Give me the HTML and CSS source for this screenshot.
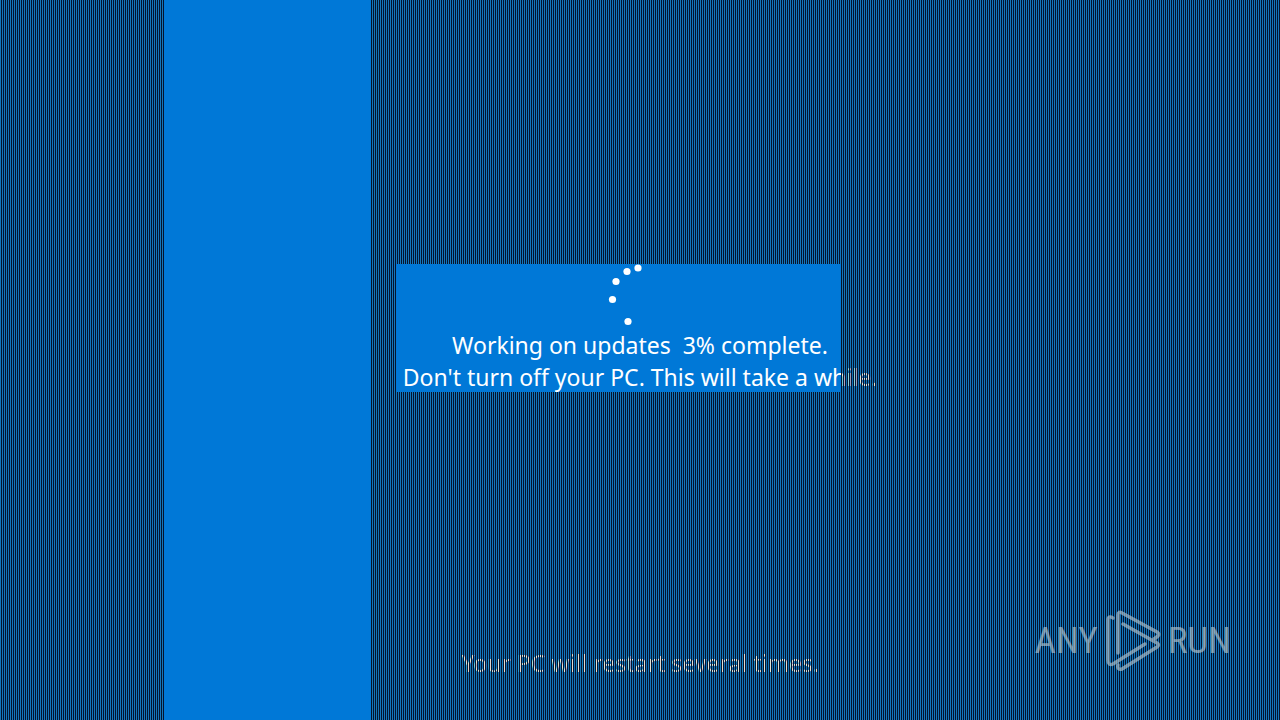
FILE: index.html
```
<!DOCTYPE html>
<html lang="en">
<head>
    <meta charset="UTF-8">
    <meta name="viewport" content="width=device-width, initial-scale=1.0">
    <title>Working on updates</title>
    <link rel="stylesheet" href="styles.css">
</head>
<body>
    <div class="screen">
        <div class="status">
            <svg class="spinner" width="60" height="64" viewBox="0 0 60 64" fill="#fff">
                <circle cx="28" cy="5" r="3.6"/>
                <circle cx="17" cy="8.5" r="3.6"/>
                <circle cx="6" cy="18.5" r="3.6"/>
                <circle cx="2.5" cy="36.5" r="3.6"/>
                <circle cx="18" cy="58.5" r="3.6"/>
            </svg>
            <p>Working on updates&nbsp; 3% complete.</p>
            <p>Don't turn off your PC. This will take a while.</p>
        </div>
        <p class="restart">Your PC will restart several times.</p>
    </div>
    <div class="mesh"></div>
    <div class="brand">
        <span>ANY</span>
        <svg width="56" height="62" viewBox="0 0 56 62" fill="none" stroke="#b4c4cc" stroke-width="3.5" stroke-linejoin="round" stroke-linecap="round">
            <path d="M13 43V5q0-4 4-2L52 22q3 2 1 4l-4 3"/>
            <path d="M8 8q-5-3-5 2v40q0 6 5 4L40 34"/>
            <path d="M18 14L52 33q3 2 0 4L17 59q-5 1-4-4"/>
        </svg>
        <span>RUN</span>
    </div>
</body>
</html>
```
FILE: styles.css
```
* {
    box-sizing: border-box;
}
body {
    margin: 0;
    background: #0078d7;
    color: #fff;
    font-family: "Noto Sans", "Open Sans", sans-serif;
    font-size: 23px;
    line-height: 32px;
}
p {
    margin: 0;
}
.screen {
    min-height: 100vh;
    padding-bottom: 41px;
    display: flex;
    flex-direction: column;
    align-items: center;
    text-align: center;
}
.status {
    margin: auto 0;
    padding-top: 8px;
}
.spinner {
    display: block;
    margin: 0 auto 2px;
    overflow: visible;
}
/* dark lines over everything except the side band and the status panel */
.mesh {
    position: absolute;
    top: 0;
    left: 0;
    width: 100%;
    height: 100%;
    background: linear-gradient(to right, rgba(100, 110, 70, 0.2) 50%, #04142e 50%);
    background-size: 2px 2px;
    clip-path: polygon(evenodd,
        0 0, 100% 0, 100% 100%, 0 100%, 0 0,
        164px 0, 371px 0, 371px 100%, 164px 100%, 164px 0, 0 0,
        calc(50% - 244px) calc(50% - 96px), calc(50% + 201px) calc(50% - 96px),
        calc(50% + 201px) calc(50% + 32px), calc(50% - 244px) calc(50% + 32px),
        calc(50% - 244px) calc(50% - 96px), 0 0);
}
.brand {
    position: absolute;
    right: 49px;
    bottom: 48px;
    display: flex;
    align-items: center;
    gap: 7px;
    color: #b4c4cc;
    font-family: "Roboto Condensed", "Liberation Sans Narrow", sans-serif;
    font-size: 37px;
    font-weight: 400;
    opacity: 0.65;
}
```
